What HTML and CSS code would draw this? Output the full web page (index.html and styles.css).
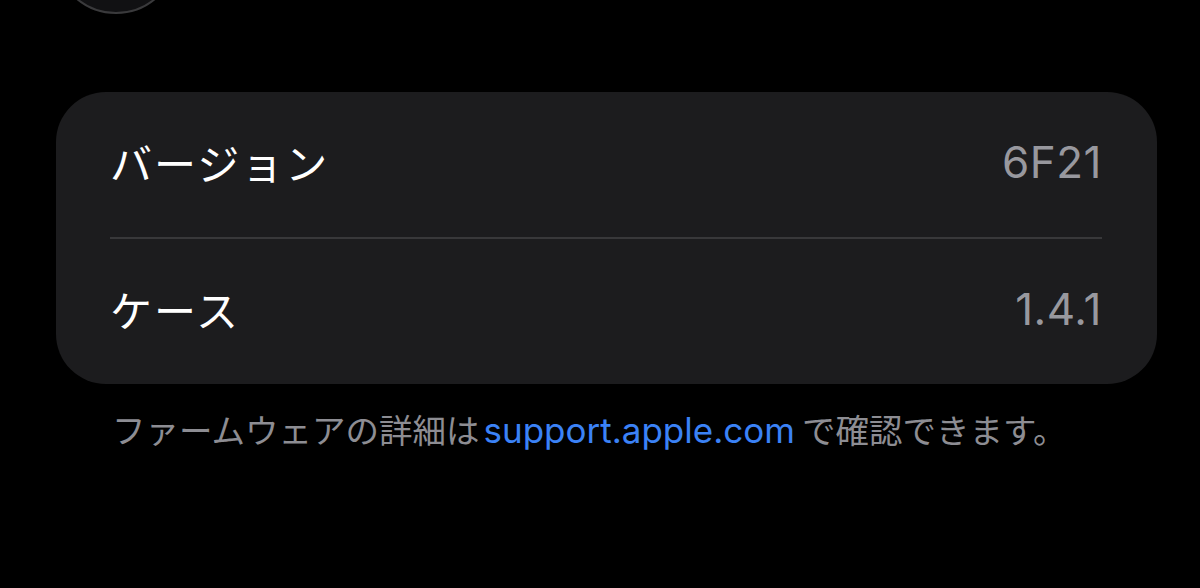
FILE: index.html
```html
<!DOCTYPE html>
<html lang="ja">
<head>
    <meta charset="UTF-8">
    <meta name="viewport" content="width=device-width, initial-scale=1.0">
    <title>バージョン情報</title>
    <link rel="stylesheet" href="styles.css">
</head>
<body>
    <div class="page">
        <!-- top of the device image, cut off by the screen edge -->
        <div class="device-top">
            <div class="device-circle"></div>
        </div>

        <div class="card">
            <div class="row">
                <span class="label">バージョン</span>
                <span class="value">6F21</span>
            </div>
            <div class="divider"></div>
            <div class="row">
                <span class="label">ケース</span>
                <span class="value">1.4.1</span>
            </div>
        </div>

        <p class="footnote">
            ファームウェアの詳細は<a href="#" class="link">support.apple.com</a>で確認できます。
        </p>
    </div>
</body>
</html>
```

FILE: styles.css
```css
html, body {
    margin: 0;
    padding: 0;
    background: #000;
}
body {
    font-family: Inter, "Noto Sans CJK JP", sans-serif;
    color: #fff;
    overflow: hidden;
}
.page {
    width: 1200px;
    height: 588px;
    padding: 0 43px 0 56px;
    box-sizing: border-box;
}
.device-top {
    height: 92px;
    overflow: hidden;
}
.device-circle {
    width: 124px;
    height: 124px;
    margin: -110px 0 0 -2px;
    border-radius: 50%;
    background: #111113;
    border: 2px solid #3a3a3c;
    box-sizing: border-box;
}
.card {
    background: #1c1c1e;
    border-radius: 50px;
    padding: 0 55px 0 54px;
}
.row {
    height: 145px;
    display: flex;
    align-items: center;
    justify-content: space-between;
}
.label {
    font-family: "Noto Sans CJK JP", sans-serif;
    font-size: 42px;
    letter-spacing: 2px;
    color: #fff;
    margin-top: -6px;
}
.value {
    font-size: 44px;
    letter-spacing: 0.5px;
    color: #98989e;
    margin-top: -6px;
}
.divider {
    height: 2px;
    background: #38383a;
}
.footnote {
    margin: 21px 0 0 56px;
    font-family: "Noto Sans CJK JP", sans-serif;
    font-size: 33.5px;
    line-height: 48px;
    color: #8d8d93;
}
.link {
    font-family: Inter, sans-serif;
    font-size: 35px;
    color: #3b82f6;
    text-decoration: none;
    margin: 0 7px 0 4px;
}
```
